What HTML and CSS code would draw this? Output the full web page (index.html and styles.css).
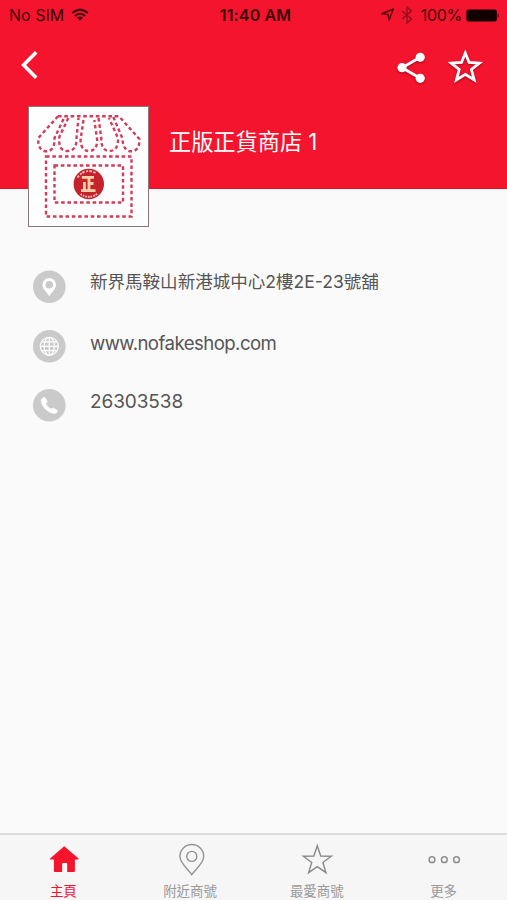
FILE: index.html
```html
<!DOCTYPE html>
<html lang="zh-Hant">
<head>
<meta charset="utf-8">
<title>正版正貨商店</title>
<link rel="stylesheet" href="styles.css">
</head>
<body>
<div class="app">
  <header class="header">
    <div class="status">
      <div class="status-left">
        <span class="carrier">No SIM</span>
        <svg class="wifi" width="18" height="13" viewBox="0 0 18 13" fill="none" stroke="#3c060b" stroke-width="2"><path d="M1.2 5Q9-1.8 16.8 5M4 8Q9 3.6 14 8"/><path d="M9 12.6 6 9.7Q9 7.5 12 9.7Z" fill="#3c060b" stroke="none"/></svg>
      </div>
      <span class="clock">11:40 AM</span>
      <div class="status-right">
        <svg width="14" height="14" viewBox="0 0 14 14" fill="none" stroke="#5a0810" stroke-width="1.5" stroke-linejoin="round"><path d="M.8 5.8 12.4 1 8 12 7 6.2Z"/></svg>
        <svg class="bluetooth" width="12" height="18" viewBox="0 0 12 18" fill="none" stroke="#8e101b" stroke-width="1.3"><path d="M1.2 5 10.5 13 6 17V1l4.5 4L1.2 13"/></svg>
        <span class="percent">100%</span>
        <svg width="34" height="13" viewBox="0 0 34 13"><rect x=".4" y=".4" width="30.4" height="12" rx="2" fill="#120000"/><path d="M31.6 4Q34 6.4 31.6 9Z" fill="#3c060b"/></svg>
      </div>
    </div>
    <nav class="toolbar">
      <svg width="20" height="30" viewBox="0 0 20 30" fill="none" stroke="#fff" stroke-width="3.6"><path d="M17.2 2.2 4.6 15 17.2 27.8"/></svg>
      <div class="actions">
        <svg class="shadowed" width="30" height="34" viewBox="0 0 30 34" fill="#fff"><path d="M25.3 7.3 7 17.7 25.3 28.3" fill="none" stroke="#fff" stroke-width="2.8"/><circle cx="25.2" cy="7.3" r="4.6"/><circle cx="7" cy="17.7" r="4.6"/><circle cx="25.2" cy="28.3" r="4.6"/></svg>
        <svg class="shadowed" width="38" height="36" viewBox="0 0 38 36" fill="none" stroke="#fff" stroke-width="2.8"><path d="M19.3 3 23.1 12.5 33.4 13.1 25.4 19.5 28.2 30 19.3 24.4 10.4 30 13.2 19.5 5.2 13.1 15.5 12.5Z"/></svg>
      </div>
    </nav>
    <div class="shop">
      <div class="logo">
        <svg width="119" height="119" viewBox="29 107 119 119">
          <g fill="none" stroke="#d23d5b" stroke-width="2.4" stroke-dasharray="3.6 2.7">
            <path d="M58 116.3H120"/>
            <path d="M58 116.3 38.3 138Q37.5 151 46.5 151.3 55 151 54.5 138L64.5 117"/>
            <path d="M68.3 118 59.3 137Q58 151 67.5 151 76.8 151 76.5 138L78.5 118"/>
            <path d="M83.5 120 80.5 140Q81 151 88.8 151 97 151 97.2 140L94.3 120"/>
            <path d="M98.5 118 101.3 138Q101 151 109.5 151 118.5 151 118 138L109 118"/>
            <path d="M113.3 117 122.3 138Q123 151 131 151.3 140 151 139.3 139L119 116.3"/>
            <path d="M46 156.5H131.5V216.5H46Z"/>
            <path d="M54.5 165.5H123V202.5H54.5Z"/>
          </g>
          <circle cx="88.8" cy="184" r="15.2" fill="#c5222c"/>
          <circle cx="88.8" cy="184" r="12.9" fill="none" stroke="#f0b5ac" stroke-width="2" stroke-dasharray="2.5 1.5 2 1.2 2.7 1.4 2.4 60" transform="rotate(240 88.8 184)"/>
          <circle cx="88.8" cy="184" r="12.9" fill="none" stroke="#f0b5ac" stroke-width="2" stroke-dasharray="1.6 .8 2 1.2 1.8 .7 1.7 .8 2 1 1.6 1 1.5 60 0 60" transform="rotate(50 88.8 184)"/>
          <path d="M81.8 177.4H94M89 177.4V190.5M89 183.5H93.5M84.4 182V190.5M81 190.6H95.5" fill="none" stroke="#ffd0a7" stroke-width="2.8"/>
        </svg>
      </div>
      <h1 class="title">正版正貨商店 1</h1>
    </div>
  </header>

  <main class="details">
    <div class="detail">
      <svg width="34" height="34" viewBox="0 0 34 34"><circle cx="17.3" cy="16.7" r="16.3" fill="#cacaca"/><path d="M17.3 26.2C14.3 22 10.5 18.5 10.5 14.8a6.8 6.8 0 0 1 13.6 0C24.1 18.5 20.3 22 17.3 26.2Z" fill="#fff"/><circle cx="17.3" cy="14.7" r="3.8" fill="#cacaca"/></svg>
      <span class="address">新界馬鞍山新港城中心2樓2E-23號舖</span>
    </div>
    <div class="detail">
      <svg width="34" height="34" viewBox="0 0 34 34"><circle cx="17.3" cy="16.3" r="16.3" fill="#cacaca"/><g transform="translate(.3 -.7)" fill="none" stroke="#fff" stroke-width="1.2"><circle cx="17" cy="17" r="9"/><ellipse cx="17" cy="17" rx="5.1" ry="9"/><path d="M17 8V26M8 17H26M9.6 12.6H24.4M9.6 21.4H24.4"/></g></svg>
      <span class="website">www.nofakeshop.com</span>
    </div>
    <div class="detail">
      <svg width="34" height="34" viewBox="0 0 34 34"><circle cx="17.3" cy="16.3" r="16.3" fill="#cacaca"/><path transform="translate(.2 -.8)" d="M10.2 10.2 12.3 9 15.1 13.4 13.5 15.6Q15.3 19 18.8 21L21 19.7 25 22.2Q25.1 25.2 22.2 25.2C15.8 24.7 9.3 18.4 9 12.2Q9 10.8 10.2 10.2Z" fill="#fff" stroke="#fff" stroke-width=".7" stroke-linejoin="round"/></svg>
      <span class="phone">26303538</span>
    </div>
  </main>

  <nav class="tabs">
    <div class="tab active">
      <svg width="34" height="34" viewBox="0 0 34 34"><path transform="translate(.9 .8)" d="M17.3 3.4 31.7 15.6Q32 16.8 30.8 16.8H28V28.2Q28 29.2 27 29.2H20.3V21.2Q20.3 20.2 19.3 20.2H16.2Q15.2 20.2 15.2 21.2V29.2H8Q7 29.2 7 28.2V16.8H4Q2.8 16.8 3.2 15.6Z" fill="#f4142e"/></svg>
      <span>主頁</span>
    </div>
    <div class="tab">
      <svg width="34" height="34" viewBox="0 0 34 34" fill="none" stroke="#939393" stroke-width="1.4"><path d="M18.8 32.6C15.6 27.6 6.9 21.1 6.9 14.4a11.9 11.9 0 0 1 23.8 0C30.7 21.1 22 27.6 18.8 32.6Z"/><circle cx="18.8" cy="14.4" r="5"/></svg>
      <span>附近商號</span>
    </div>
    <div class="tab">
      <svg width="34" height="34" viewBox="0 0 34 34" fill="none" stroke="#8a8a8a" stroke-width="1.4"><path transform="translate(0 1)" d="M17.3 2.8 20.7 13 31.3 13.2 22.9 19.5 26 29.7 17.3 23.7 8.6 29.7 11.7 19.5 3.3 13.2 13.9 13Z"/></svg>
      <span>最愛商號</span>
    </div>
    <div class="tab">
      <svg width="34" height="34" viewBox="0 0 34 34" fill="none" stroke="#8f8f8f" stroke-width="1.5"><circle cx="5" cy="17.7" r="2.9"/><circle cx="17.3" cy="17.7" r="2.9"/><circle cx="29.5" cy="17.7" r="2.9"/></svg>
      <span>更多</span>
    </div>
  </nav>
</div>
</body>
</html>
```

FILE: styles.css
```css
* { box-sizing: border-box; }
body {
  margin: 0;
  background: #fafafa;
  font-family: Inter, "Noto Sans CJK TC", sans-serif;
}
svg { display: block; flex: none; }
.app { height: 900px; display: flex; flex-direction: column; }
.header {
  height: 189px;
  flex: none;
  background: #f4142e;
  border-bottom: 1px solid #df142b;
}
.status {
  height: 30px;
  padding: 0 7px 0 9px;
  display: grid;
  grid-template-columns: 1fr auto 1fr;
  align-items: center;
  color: #3c060b;
  font-size: 16px;
  line-height: 30px;
}
.status-left, .status-right { display: flex; align-items: center; }
.status-left { gap: 7px; }
.status-right { justify-content: flex-end; }
.wifi { margin-bottom: 2px; }
.bluetooth { margin: 0 8px 0 6px; }
.percent { margin-right: 4px; letter-spacing: -0.3px; }
.clock { font-weight: 600; padding-left: 2px; letter-spacing: 0.15px; }
.toolbar {
  height: 76px;
  padding: 20px 23px 0 19px;
  display: flex;
  justify-content: space-between;
}
.actions { display: flex; gap: 21px; }
.shadowed { filter: drop-shadow(0 1px 1px rgba(90, 0, 10, .55)); }
.shop { display: flex; align-items: flex-start; padding-left: 28px; }
.logo {
  width: 121px;
  height: 121px;
  flex: none;
  background: #fefefe;
  border: 1px solid #8c7779;
}
.title {
  margin: 20px 0 0 20px;
  color: #fff;
  font-size: 22.2px;
  line-height: 32px;
  font-weight: 400;
}
.details {
  flex: 1;
  padding: 81px 0 0 32px;
  display: flex;
  flex-direction: column;
  gap: 25.5px;
  color: #555;
}
.detail { display: flex; height: 34px; gap: 24px; }
.detail span { line-height: 24px; font-size: 19px; white-space: nowrap; }
.detail .address { font-size: 17.55px; }
.detail .website { margin-top: 1px; font-size: 18.6px; letter-spacing: -0.55px; }
.detail .phone { margin-top: 1px; letter-spacing: -0.1px; }
.tabs {
  height: 67px;
  flex: none;
  display: grid;
  grid-template-columns: repeat(4, 1fr);
  background: #f6f6f6;
  border-top: 2px solid #dcdcdc;
}
.tab {
  display: flex;
  flex-direction: column;
  align-items: center;
  padding-top: 7px;
  color: #999;
  font-size: 13.5px;
  line-height: 20px;
}
.tab span { margin-top: 5px; }
.active { color: #f4142e; }
```
